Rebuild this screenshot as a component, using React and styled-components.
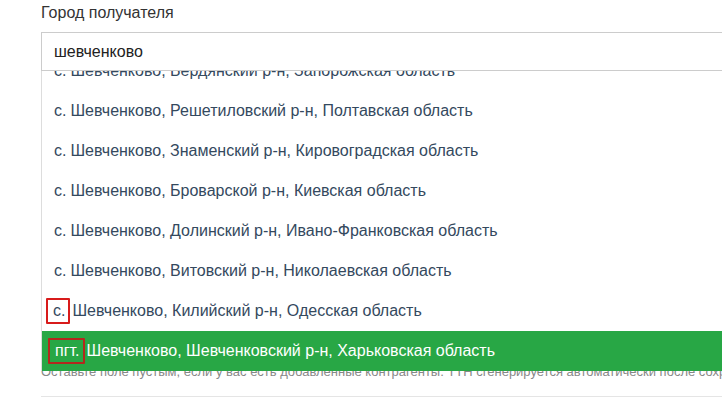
import { useEffect, useRef } from 'react';
import styled, { createGlobalStyle } from 'styled-components';

const GlobalStyle = createGlobalStyle`
    body {
        margin: 0;
        background: #fff;
        font-family: "Liberation Sans", Arial, sans-serif;
        overflow: hidden;
    }
`;

const Page = styled.div`
    position: relative;
    width: 722px;
    height: 413px;
    overflow: hidden;
    padding: 4px 0 0 41px;
    box-sizing: border-box;
`;

const Label = styled.label`
    display: block;
    font-size: 16px;
    line-height: 18px;
    color: #333;
    margin-bottom: 10px;
`;

const Field = styled.div`
    position: relative;
    width: 720px;
`;

const Input = styled.input`
    display: block;
    width: 100%;
    height: 39px;
    box-sizing: border-box;
    border: 1px solid #ccc;
    padding: 0 12px;
    font-family: inherit;
    font-size: 16px;
    color: #222;
    outline: none;
`;

const Dropdown = styled.ul`
    position: absolute;
    top: 39px;
    left: 0;
    right: 0;
    height: 300px;
    margin: 0;
    padding: 0;
    list-style: none;
    background: #fff;
    border-left: 1px solid #ddd;
    overflow: hidden;
    z-index: 2;
`;

const Option = styled.li`
    height: 40px;
    display: flex;
    align-items: center;
    padding: 0 12px;
    font-size: 16px;
    white-space: nowrap;
    color: ${(p) => (p.$active ? '#fff' : '#34495e')};
    background: ${(p) => (p.$active ? '#28a745' : '#fff')};
`;

const Kind = styled.span`
    margin-right: 4px;
`;

const Marked = styled.span`
    margin: 0 2px 0 ${(p) => (p.$onGreen ? '-6px' : '-8px')};
    padding: 2px 3px 2px 5px;
    border: 2px solid ${(p) => (p.$onGreen ? '#b4281e' : '#d81b1b')};
    border-radius: 1px;
`;

const Help = styled.p`
    margin: 292px 0 0;
    font-size: 13px;
    line-height: 18px;
    color: #888;
    white-space: nowrap;
`;

const Divider = styled.hr`
    margin: 15px 0 0;
    border: none;
    border-top: 1px solid #e5e5e5;
`;

const cities = [
    { kind: 'с.', area: 'Бердянский р-н, Запорожская область' },
    { kind: 'с.', area: 'Решетиловский р-н, Полтавская область' },
    { kind: 'с.', area: 'Знаменский р-н, Кировоградская область' },
    { kind: 'с.', area: 'Броварской р-н, Киевская область' },
    { kind: 'с.', area: 'Долинский р-н, Ивано-Франковская область' },
    { kind: 'с.', area: 'Витовский р-н, Николаевская область' },
    { kind: 'с.', area: 'Килийский р-н, Одесская область', marked: true },
    { kind: 'пгт.', area: 'Шевченковский р-н, Харьковская область', marked: true, active: true },
];

const App = () => {
    const listRef = useRef(null);

    useEffect(() => {
        // keep the highlighted option at the bottom of the list
        if (listRef.current) listRef.current.scrollTop = 21;
    }, []);

    return (
        <>
            <GlobalStyle />
            <Page>
                <Label>Город получателя</Label>
                <Field>
                    <Input defaultValue="шевченково" />
                    <Dropdown ref={listRef}>
                        {cities.map((c, i) => (
                            <Option key={i} $active={c.active}>
                                {c.marked ? (
                                    <Marked $onGreen={c.active}>{c.kind}</Marked>
                                ) : (
                                    <Kind>{c.kind}</Kind>
                                )}
                                Шевченково, {c.area}
                            </Option>
                        ))}
                    </Dropdown>
                </Field>
                <Help>
                    Оставьте поле пустым, если у вас есть добавленные контрагенты. ТТН
                    сгенерируется автоматически после сохранения
                </Help>
                <Divider />
            </Page>
        </>
    );
};

export default App;
